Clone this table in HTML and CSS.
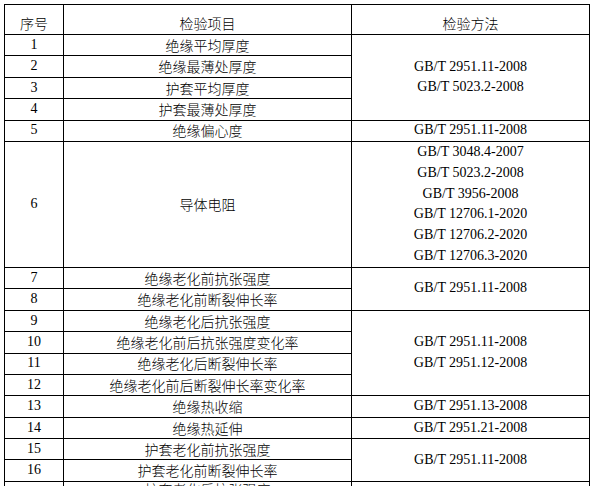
FILE: index.html
```html
<!DOCTYPE html>
<html lang="zh-CN">
<head>
<meta charset="utf-8">
<title>检验项目</title>
<link rel="stylesheet" href="styles.css">
</head>
<body>
<div class="spec" role="table">
  <div class="cell no head" role="columnheader">序号</div>
  <div class="cell item head" role="columnheader">检验项目</div>
  <div class="cell method head" role="columnheader">检验方法</div>

  <div class="cell no">1</div>
  <div class="cell item">绝缘平均厚度</div>
  <div class="cell method span-4">GB/T 2951.11-2008<br>GB/T 5023.2-2008</div>
  <div class="cell no">2</div>
  <div class="cell item">绝缘最薄处厚度</div>
  <div class="cell no">3</div>
  <div class="cell item">护套平均厚度</div>
  <div class="cell no">4</div>
  <div class="cell item">护套最薄处厚度</div>

  <div class="cell no">5</div>
  <div class="cell item">绝缘偏心度</div>
  <div class="cell method">GB/T 2951.11-2008</div>

  <div class="cell no">6</div>
  <div class="cell item">导体电阻</div>
  <div class="cell method">GB/T 3048.4-2007<br>GB/T 5023.2-2008<br>GB/T 3956-2008<br>GB/T 12706.1-2020<br>GB/T 12706.2-2020<br>GB/T 12706.3-2020</div>

  <div class="cell no">7</div>
  <div class="cell item">绝缘老化前抗张强度</div>
  <div class="cell method span-2">GB/T 2951.11-2008</div>
  <div class="cell no">8</div>
  <div class="cell item">绝缘老化前断裂伸长率</div>

  <div class="cell no">9</div>
  <div class="cell item">绝缘老化后抗张强度</div>
  <div class="cell method span-4">GB/T 2951.11-2008<br>GB/T 2951.12-2008</div>
  <div class="cell no">10</div>
  <div class="cell item">绝缘老化前后抗张强度变化率</div>
  <div class="cell no">11</div>
  <div class="cell item">绝缘老化后断裂伸长率</div>
  <div class="cell no">12</div>
  <div class="cell item">绝缘老化前后断裂伸长率变化率</div>

  <div class="cell no">13</div>
  <div class="cell item">绝缘热收缩</div>
  <div class="cell method">GB/T 2951.13-2008</div>

  <div class="cell no">14</div>
  <div class="cell item">绝缘热延伸</div>
  <div class="cell method">GB/T 2951.21-2008</div>

  <div class="cell no">15</div>
  <div class="cell item">护套老化前抗张强度</div>
  <div class="cell method span-2">GB/T 2951.11-2008</div>
  <div class="cell no">16</div>
  <div class="cell item">护套老化前断裂伸长率</div>

  <div class="cell no">17</div>
  <div class="cell item top">护套老化后抗张强度</div>
  <div class="cell method span-4">GB/T 2951.11-2008<br>GB/T 2951.12-2008</div>
  <div class="cell no">18</div>
  <div class="cell item">护套老化前后抗张强度变化率</div>
  <div class="cell no">19</div>
  <div class="cell item">护套老化后断裂伸长率</div>
  <div class="cell no">20</div>
  <div class="cell item">护套老化前后断裂伸长率变化率</div>
</div>
</body>
</html>
```
FILE: styles.css
```css
html, body {
  background: #fff;
}
body {
  margin: 0;
  padding: 4px;
  color: #000;
  font-family: "Liberation Serif", "Noto Sans CJK SC", serif;
  font-size: 14px;
}
.spec {
  display: grid;
  width: 586px;
  box-sizing: border-box;
  border-top: 1px solid #000;
  border-left: 1px solid #000;
  grid-template-columns: 59px 288px 238px;
  grid-template-rows: 30px repeat(5, 21.4px) 126px;
  grid-auto-rows: 21.4px;
}
.cell {
  box-sizing: border-box;
  border-right: 1px solid #000;
  border-bottom: 1px solid #000;
  display: flex;
  align-items: center;
  justify-content: center;
  text-align: center;
  line-height: 20.7px;
  white-space: nowrap;
  overflow: hidden;
}
.no { grid-column: 1; }
.item {
  grid-column: 2;
  font-family: "Noto Sans CJK SC", sans-serif;
  font-weight: 300;
}
.method { grid-column: 3; }
.head {
  align-items: flex-end;
  font-family: "Noto Sans CJK SC", sans-serif;
  font-weight: 300;
}
.span-2 { grid-row: span 2; }
.span-4 { grid-row: span 4; }
.top {
  align-items: flex-start;
  line-height: 15px;
}
```
